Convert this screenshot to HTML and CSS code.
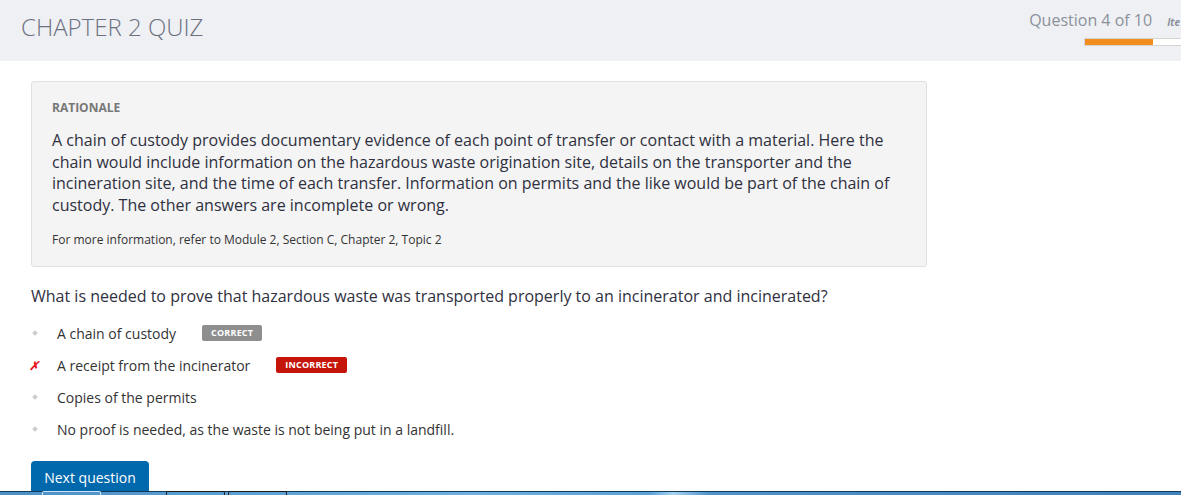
FILE: index.html
```html
<!DOCTYPE html>
<html>
<head>
<meta charset="utf-8">
<link rel="stylesheet" href="styles.css">
</head>
<body>
<header class="topbar">
  <h1 class="title">CHAPTER 2 QUIZ</h1>
  <div class="status">
    <div class="status-row">
      <span class="qcount">Question 4 of 10</span>
      <span class="item">Ite</span>
    </div>
    <div class="progress"><div class="progress-fill" style="width:71%"></div></div>
  </div>
</header>
<main class="content">
  <section class="rationale">
    <div class="rationale-label">RATIONALE</div>
    <p class="rationale-text">A chain of custody provides documentary evidence of each point of transfer or contact with a material. Here the chain would include information on the hazardous waste origination site, details on the transporter and the incineration site, and the time of each transfer. Information on permits and the like would be part of the chain of custody. The other answers are incomplete or wrong.</p>
    <p class="rationale-ref">For more information, refer to Module 2, Section C, Chapter 2, Topic 2</p>
  </section>
  <p class="question">What is needed to prove that hazardous waste was transported properly to an incinerator and incinerated?</p>
  <ul class="options">
    <li class="option"><span class="mark dot"></span><span class="opt-text">A chain of custody</span><span class="badge badge-correct">CORRECT</span></li>
    <li class="option"><span class="mark cross">✗</span><span class="opt-text">A receipt from the incinerator</span><span class="badge badge-incorrect">INCORRECT</span></li>
    <li class="option"><span class="mark dot"></span><span class="opt-text">Copies of the permits</span></li>
    <li class="option"><span class="mark dot"></span><span class="opt-text">No proof is needed, as the waste is not being put in a landfill.</span></li>
  </ul>
  <button class="next-btn">Next question</button>
</main>
<div class="taskbar">
  <span class="tab tab1"></span><span class="tab tab2"></span><span class="tab tab3"></span>
</div>
</body>
</html>
```
FILE: styles.css
```css
* { box-sizing: border-box; }
html, body { margin: 0; padding: 0; }
body {
  font-family: "Open Sans", "Liberation Sans", sans-serif;
  color: #2f3038;
  background: #fff;
  width: 1181px;
  height: 495px;
  overflow: hidden;
  position: relative;
}
.topbar {
  height: 61px;
  background: #eff0f4;
  display: flex;
  justify-content: space-between;
  align-items: flex-start;
  padding-left: 21px;
}
.title {
  margin: 10px 0 0;
  font-size: 24px;
  font-weight: 300;
  color: #6b7180;
  letter-spacing: 0;
}
.status {
  display: flex;
  flex-direction: column;
  align-items: flex-end;
  padding-top: 9px;
}
.status-row {
  display: flex;
  align-items: baseline;
  gap: 15px;
  white-space: nowrap;
  margin-right: 1px;
}
.qcount {
  font-size: 16px;
  color: #8b909b;
}
.item {
  font-size: 10px;
  font-style: italic;
  font-weight: 700;
  color: #8b909b;
}
.progress {
  margin-top: 7px;
  width: 97px;
  height: 8px;
  background: #fff;
  border: 1px solid #d4d4d4;
  border-right: none;
  align-self: flex-end;
}
.progress-fill {
  height: 100%;
  background: #f28e1f;
}
.content {
  padding: 20px 31px 0;
}
.rationale {
  width: 896px;
  background: #f4f4f4;
  border: 1px solid #e0e0e0;
  border-radius: 3px;
  padding: 18px 20px 18px;
}
.rationale-label {
  font-size: 12px;
  font-weight: 700;
  color: #777;
  line-height: 16px;
}
.rationale-text {
  margin: 14px 0 0;
  font-size: 16px;
  line-height: 21.5px;
  color: #2f3040;
}
.rationale-ref {
  margin: 16px 0 0;
  font-size: 12px;
  line-height: 16px;
  color: #333;
}
.question {
  margin: 18px 0 0;
  font-size: 16px;
  line-height: 22px;
  color: #2f3040;
}
.options {
  list-style: none;
  margin: 10px 0 0;
  padding: 0;
}
.option {
  display: flex;
  align-items: center;
  height: 32px;
  font-size: 14px;
  color: #333;
}
.mark {
  width: 26px;
  flex: none;
  display: flex;
  align-items: center;
}
.dot::before {
  content: "";
  display: block;
  width: 4px;
  height: 4px;
  margin-left: 2px;
  background: #cdcdcd;
  transform: rotate(45deg);
}
.cross {
  color: #e8151c;
  font-size: 12px;
  font-weight: 700;
  font-style: italic;
  margin-left: -2px;
  width: 28px;
}
.badge {
  display: inline-block;
  margin-left: 26px;
  padding: 0 9px;
  height: 16px;
  line-height: 16px;
  font-size: 9px;
  font-weight: 700;
  letter-spacing: 0.2px;
  color: #fff;
  border-radius: 2px;
}
.badge-correct { background: #8e8e8e; }
.badge-incorrect { background: #c5150b; }
.next-btn {
  margin-top: 16px;
  width: 118px;
  height: 34px;
  border: none;
  border-radius: 4px 4px 0 0;
  background: #0068ad;
  color: #fff;
  font-family: "Open Sans", "Liberation Sans", sans-serif;
  font-size: 14px;
  padding: 0;
  padding-bottom: 2px;
}
.taskbar {
  position: absolute;
  left: 0;
  right: 0;
  bottom: 0;
  height: 4px;
  border-top: 1px solid #123a55;
  background: linear-gradient(90deg, #4a8fc6 0%, #6fb0e0 40%, #5aa2d8 55%, #a9d3f3 57%, #4e93cc 60%, #3f80bd 100%);
}
.tab {
  position: absolute;
  top: -1px;
  height: 4px;
  width: 59px;
  border: 1px solid #cfe3f3;
  border-bottom: none;
  border-radius: 2px 2px 0 0;
}
.tab1 { left: 42px; }
.tab2 { left: 166px; border-color: #1a1a1a; }
.tab3 { left: 228px; border-color: #1a1a1a; }
```
